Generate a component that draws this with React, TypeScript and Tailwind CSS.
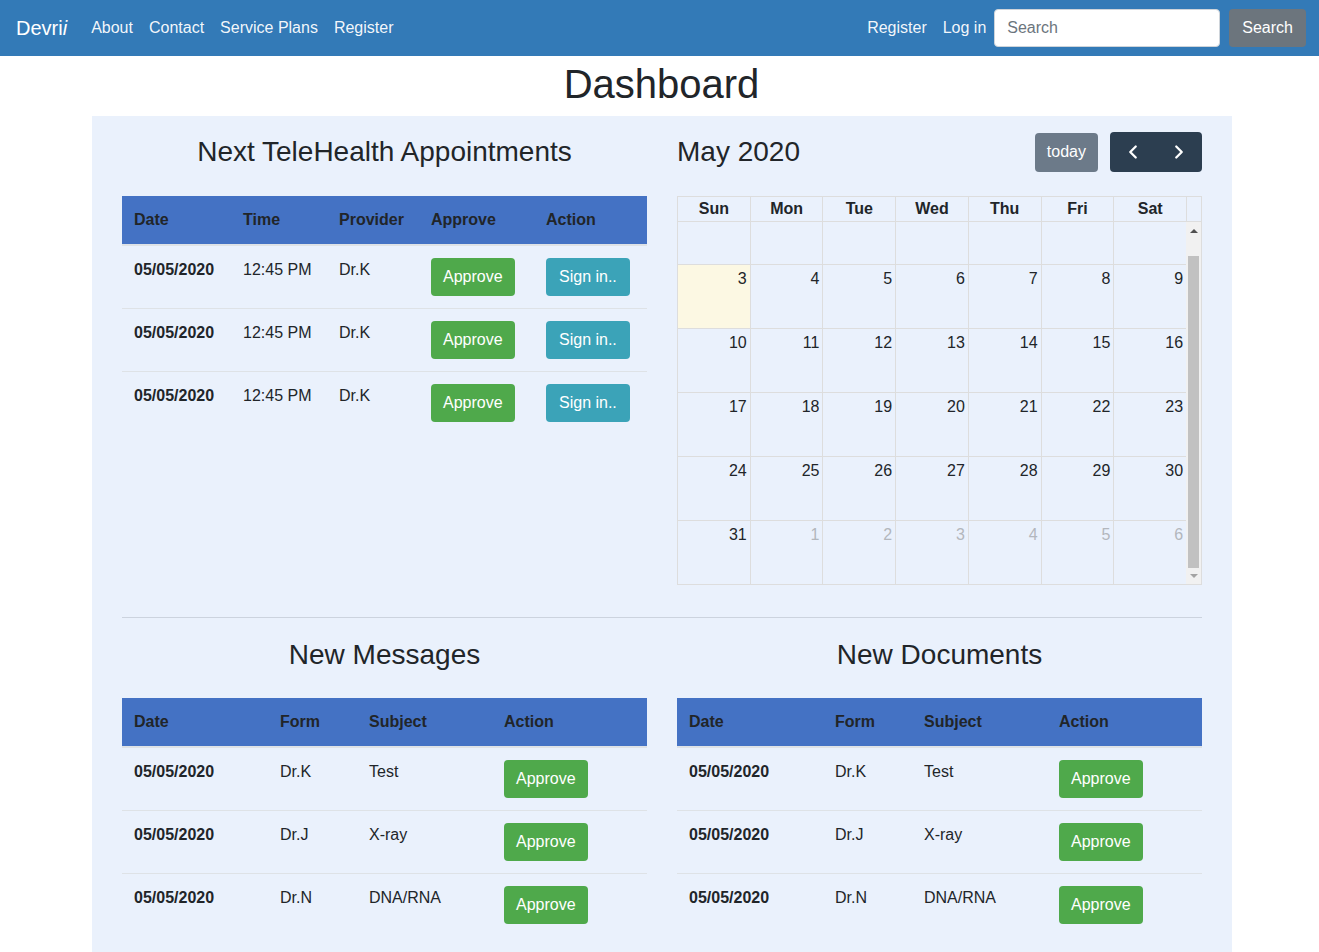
import React from 'react';
import { ChevronLeft, ChevronRight } from 'lucide-react';

const font = { fontFamily: '"Liberation Sans", Arial, sans-serif' };

const NavBar: React.FC = () => (
  <nav className="h-[56px] bg-[#337ab7] flex items-center pl-4 pr-[13px] text-white">
    <a className="text-[20px] mr-4 text-white">
      Devri<i>i</i>
    </a>
    <div className="flex items-center">
      {['About', 'Contact', 'Service Plans', 'Register'].map((l) => (
        <a key={l} className="px-2 text-[16px] text-white/95">
          {l}
        </a>
      ))}
    </div>
    <div className="ml-auto flex items-center">
      <a className="px-2 text-[16px] text-white/95">Register</a>
      <a className="pl-2 text-[16px] text-white/95">Log in</a>
      <input
        placeholder="Search"
        className="ml-[8px] w-[226px] h-[38px] rounded bg-white border border-[#ced4da] px-3 text-[16px] text-[#495057] placeholder:text-[#6c757d] outline-none"
        style={font}
      />
      <button className="ml-[9px] h-[38px] px-[13px] rounded bg-[#6c757d] text-white text-[16px]">
        Search
      </button>
    </div>
  </nav>
);

const ApproveBtn = () => (
  <button className="h-[38px] px-3 rounded bg-[#4fa94b] text-white text-[16px]">Approve</button>
);

const SignBtn = () => (
  <button className="h-[38px] px-[13px] rounded bg-[#3ba3b8] text-white text-[16px]">Sign in..</button>
);

type Col = { label: string; w: string };

const DataTable: React.FC<{ cols: Col[]; rows: React.ReactNode[][] }> = ({ cols, rows }) => (
  <table className="w-full border-collapse text-[16px] text-[#212529]">
    <thead>
      <tr className="bg-[#4472c4]">
        {cols.map((c) => (
          <th key={c.label} className={`${c.w} text-left font-bold px-3 pt-[12px] pb-[12px] leading-6 border-b-2 border-[#dee2e6]`}>
            {c.label}
          </th>
        ))}
      </tr>
    </thead>
    <tbody>
      {rows.map((r, i) => (
        <tr key={i} className={i > 0 ? 'border-t border-[#dee2e6]' : ''}>
          {r.map((cell, j) => (
            <td key={j} className={`px-3 py-3 align-top leading-6 h-[62px] ${j === 0 ? 'font-bold' : ''}`}>
              {cell}
            </td>
          ))}
        </tr>
      ))}
    </tbody>
  </table>
);

const days = ['Sun', 'Mon', 'Tue', 'Wed', 'Thu', 'Fri', 'Sat'];
const weeks: { n: number; other?: boolean; today?: boolean }[][] = [
  [3, 4, 5, 6, 7, 8, 9].map((n) => ({ n, today: n === 3 })),
  [10, 11, 12, 13, 14, 15, 16].map((n) => ({ n })),
  [17, 18, 19, 20, 21, 22, 23].map((n) => ({ n })),
  [24, 25, 26, 27, 28, 29, 30].map((n) => ({ n })),
  [{ n: 31 }, ...[1, 2, 3, 4, 5, 6].map((n) => ({ n, other: true }))],
];

const Calendar: React.FC = () => (
  <div>
    <div className="flex items-center justify-between h-[40px] mt-[16px] mb-[24px]">
      <h2 className="text-[28px] text-[#212529] leading-none">May 2020</h2>
      <div className="flex items-center gap-3">
        <button className="h-[39px] px-3 rounded bg-[#6c7a89] text-white text-[16px]">today</button>
        <div className="flex h-[40px] rounded bg-[#2c3e50] text-white">
          <button className="w-[46px] flex items-center justify-center">
            <ChevronLeft size={22} strokeWidth={2.5} />
          </button>
          <button className="w-[46px] flex items-center justify-center">
            <ChevronRight size={22} strokeWidth={2.5} />
          </button>
        </div>
      </div>
    </div>
    <div className="border border-[#dddddd] text-[#212529]">
      <div className="flex h-[25px] border-b border-[#dddddd]">
        {days.map((d) => (
          <div key={d} className="flex-1 border-r border-[#dddddd] text-center font-bold leading-6">
            {d}
          </div>
        ))}
        <div className="w-[14px]" />
      </div>
      <div className="flex">
        <div className="flex-1">
          <div className="flex h-[43px] border-b border-[#dddddd]">
            {days.map((d) => (
              <div key={d} className="flex-1 border-r border-[#dddddd] last:border-r-0" />
            ))}
          </div>
          {weeks.map((w, i) => (
            <div key={i} className={`flex ${i < weeks.length - 1 ? 'h-[64px] border-b border-[#dddddd]' : 'h-[63px]'}`}>
              {w.map((d, j) => (
                <div
                  key={j}
                  className={`flex-1 border-r border-[#dddddd] last:border-r-0 text-right pr-[3px] pt-[2px] leading-6 ${
                    d.today ? 'bg-[#fcf8e3]' : ''
                  } ${d.other ? 'text-[#b3b7bd]' : ''}`}
                >
                  {d.n}
                </div>
              ))}
            </div>
          ))}
        </div>
        <div className="w-[15px] bg-[#f1f1f1] flex flex-col items-center">
          <div className="h-[18px] flex items-center justify-center">
            <div className="w-0 h-0 border-l-[4px] border-r-[4px] border-b-[4px] border-l-transparent border-r-transparent border-b-[#505050]" />
          </div>
          <div className="w-[11px] flex-1 bg-[#c1c1c1] mt-[16px]" />
          <div className="h-[16px] flex items-center justify-center">
            <div className="w-0 h-0 border-l-[4px] border-r-[4px] border-t-[4px] border-l-transparent border-r-transparent border-t-[#a3a3a3]" />
          </div>
        </div>
      </div>
    </div>
  </div>
);

const msgCols: Col[] = [
  { label: 'Date', w: 'w-[146px]' },
  { label: 'Form', w: 'w-[89px]' },
  { label: 'Subject', w: 'w-[135px]' },
  { label: 'Action', w: '' },
];

const msgRows = [
  ['05/05/2020', 'Dr.K', 'Test', <ApproveBtn />],
  ['05/05/2020', 'Dr.J', 'X-ray', <ApproveBtn />],
  ['05/05/2020', 'Dr.N', 'DNA/RNA', <ApproveBtn />],
];

export default function App() {
  return (
    <div className="min-h-screen bg-white" style={font}>
      <NavBar />
      <h1 className="text-center text-[40px] leading-[48px] text-[#212529] pt-[4px] pb-[8px] pl-[4px]">Dashboard</h1>
      <div className="w-[1140px] ml-[92px] bg-[#eaf1fc] px-[30px] pb-[20px]">
        <div className="grid grid-cols-2 gap-[30px]">
          <div>
            <h3 className="text-center text-[28px] leading-[34px] text-[#212529] pt-[19px] mb-[27px]">
              Next TeleHealth Appointments
            </h3>
            <DataTable
              cols={[
                { label: 'Date', w: 'w-[109px]' },
                { label: 'Time', w: 'w-[96px]' },
                { label: 'Provider', w: 'w-[92px]' },
                { label: 'Approve', w: 'w-[115px]' },
                { label: 'Action', w: '' },
              ]}
              rows={[0, 1, 2].map(() => ['05/05/2020', '12:45 PM', 'Dr.K', <ApproveBtn />, <SignBtn />])}
            />
          </div>
          <Calendar />
        </div>
        <hr className="mt-[32px] border-t border-[#ccd3de]" />
        <div className="grid grid-cols-2 gap-[30px]">
          <div>
            <h3 className="text-center text-[28px] leading-[34px] text-[#212529] pt-[20px] mb-[26px]">New Messages</h3>
            <DataTable cols={msgCols} rows={msgRows} />
          </div>
          <div>
            <h3 className="text-center text-[28px] leading-[34px] text-[#212529] pt-[20px] mb-[26px]">New Documents</h3>
            <DataTable cols={msgCols} rows={msgRows} />
          </div>
        </div>
      </div>
    </div>
  );
}
